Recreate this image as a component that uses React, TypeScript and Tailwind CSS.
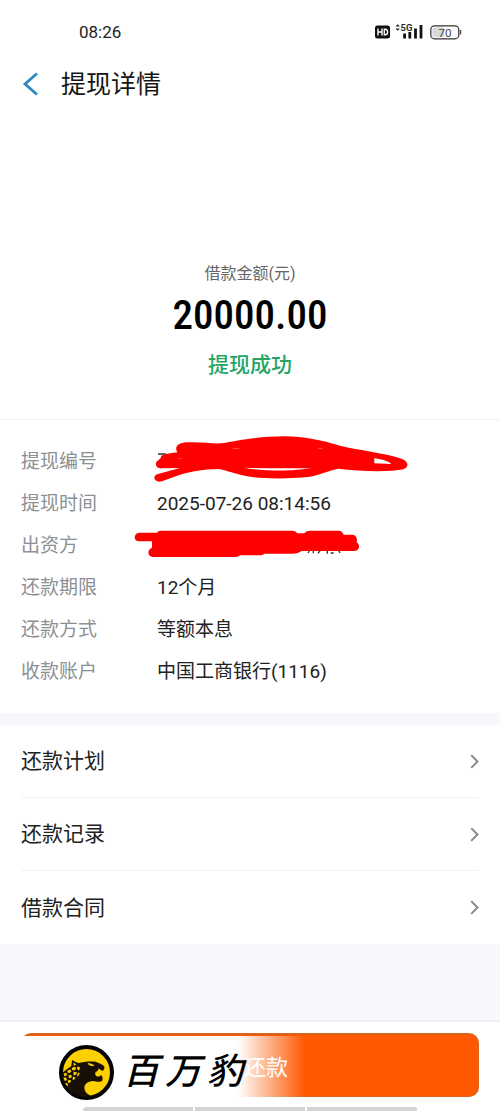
import type { ReactNode } from "react";

const details: { label: string; value: ReactNode }[] = [
  { label: "提现编号", value: "" },
  { label: "提现时间", value: "2025-07-26 08:14:56" },
  { label: "出资方", value: "" },
  { label: "还款期限", value: "12个月" },
  { label: "还款方式", value: "等额本息" },
  { label: "收款账户", value: "中国工商银行(1116)" },
];

const links = ["还款计划", "还款记录", "借款合同"];

function StatusBar() {
  return (
    <div className="flex h-16 items-center justify-between pr-[38px] pl-[79px]">
      <time className="text-[17px] leading-6 text-[#222]">08:26</time>
      <div className="flex items-center">
        <svg width="88" height="18" viewBox="0 0 88 18" aria-label="HD 5G 70">
          <rect x="1" y="2.5" width="15" height="13" rx="2.500" fill="#111" />
          <path d="M4 5.500v7M8 5.500v7M4 9h4M10.300 6.200v5.600h1c1.700 0 2.300-1.200 2.300-2.800s-.6-2.800-2.300-2.800z" fill="none" stroke="#fff" strokeWidth="1.400" />
          <path d="M21.500 3.500l2.200-2.300 2.200 2.300zM21.500 5.500l2.200 2.300 2.200-2.300z" fill="#222" />
          <path d="M30.600 10.500v5M35.800 9v6.500M41.500 5.500v10M47 2v13.500" stroke="#111" strokeWidth="2.800" />
          <text x="26.500" y="8" fontSize="9.500" fontWeight="600" fill="#222" stroke="#fff" strokeWidth="1.200" paintOrder="stroke">5G</text>
          <rect x="56.800" y="2.800" width="28" height="13" rx="3.800" fill="#fff" stroke="#333" strokeWidth="1.200" />
          <path d="M61 4.300h9v10h-9a2.600 2.600 0 0 1-2.600-2.600V6.900A2.600 2.600 0 0 1 61 4.300z" fill="#d8d8d8" />
          <path d="M86.500 7v4.500" stroke="#555" strokeWidth="1.500" />
          <text x="64.500" y="13.500" fontSize="11.500" fill="#444">70</text>
        </svg>
      </div>
    </div>
  );
}

function Redactions() {
  return (
    <svg
      className="pointer-events-none absolute top-[5px] left-[120px]"
      width="300"
      height="140"
      viewBox="0 0 900 420"
      aria-hidden="true"
    >
      <path d="M114 87h24M568 378l-4 6M580 374v11M604 372l-10 13M622 376v10M632 384h9M655 374l5 10" stroke="#333" strokeWidth="4" fill="none" />
      <path
        fill="#f00"
        d="M170 78C164 62 178 52 205 52C250 50 280 58 312 54C350 46 420 34 495 34C550 34 605 46 660 62C720 76 790 84 835 98C858 104 864 114 862 122C858 134 842 134 815 137C760 141 705 136 655 131C620 138 600 150 565 156C500 162 420 162 378 153C340 146 320 136 295 132C250 132 200 142 178 150L128 168C112 174 103 166 103 157C104 150 112 146 125 144L180 129L128 130C114 132 106 124 108 114C110 106 120 104 122 98C124 88 140 86 172 82Z"
      />
      <path d="M372 128C420 138 520 140 574 129C500 131 440 130 372 128ZM763 99L763 115L814 117C804 107 780 102 763 99Z" fill="#fff" />
      <path d="M175 101h12M338 71l20-1M594 70l14 1" stroke="#f99" strokeWidth="1.500" />
      <path
        fill="#f00"
        d="M58 323H110C116 317 122 317 130 317H517C525 317 527 321 533 325H553C558 319 562 317 570 317H656C665 317 668 322 671 329H695C708 329 713 338 710 352C722 360 719 377 703 378H545C538 383 530 386 518 386H433C428 391 420 391 410 391H360C354 396 348 396 340 396H99C82 396 80 374 96 368V349H57C39 347 40 325 58 323Z"
      />
    </svg>
  );
}

function PantherLogo() {
  return (
    <svg className="size-[55px] shrink-0" viewBox="27 29 164 164" aria-hidden="true">
      <circle cx="109" cy="111" r="76" fill="#fdd000" stroke="#050403" strokeWidth="12" />
      <path
        fill="#181007"
        d="M66 74C73 78 80 82 86 83C98 79 120 77 137 79C144 83 158 87 162 93C163 98 162 102 158 105C152 108 150 99 145 100C144 105 141 108 137 109C133 113 135 120 139 122C145 123 149 123 151 119L155 121C158 128 158 134 154 137C147 140 137 137 128 136C116 137 106 142 103 152C101 165 108 176 124 181C80 193 36 160 35 112C43 110 48 101 58 96C66 94 64 84 66 74Z"
      />
      <path d="M112 83C120 83 127 86 133 90C126 93 115 92 112 83Z" fill="#fdd000" />
      <path d="M70 81l9 6l-8 4z" fill="#fdd000" />
      <g fill="#fdd000">
        <path d="M66 97l9-3 3 6-6 5-7-2zM82 92l8 4-3 9-6-4zM53 104l8-2 3 7-7 4-5-3zM70 109l10 1-1 7-8 3zM41 114l8-2 2 7-8 3zM84 111l5 2-4 8-5 2zM56 118l9 1-1 8-8 1zM40 127l8-1 3 7-7 3zM69 124l7 1-4 8-5-2zM53 134l9-1 0 7-7 3zM45 143l6-1 4 7-4 2z" />
      </g>
    </svg>
  );
}

export default function App() {
  return (
    <main className="w-full bg-white font-[Roboto,'Noto_Sans_CJK_SC',sans-serif] text-[#222]">
      <StatusBar />

      <header className="flex h-10 items-center gap-[22px] pl-[22px]">
        <button type="button" aria-label="返回">
          <svg width="17" height="24" viewBox="0 0 17 24" fill="none" stroke="#2a87bf" strokeWidth="2.800">
            <path d="M15 1.500L3 12L15 22.500" />
          </svg>
        </button>
        <h1 className="pt-[2px] text-[25px] leading-9 font-normal text-[#151515]">提现详情</h1>
      </header>

      <section className="flex flex-col items-center pt-[158px] pb-[38px] text-center">
        <p className="text-base leading-6 text-[#666]">借款金额(元)</p>
        <p className="mt-[3px] font-['Roboto_Condensed',Roboto,sans-serif] text-[41px] leading-[52px] font-medium text-black">
          20000.00
        </p>
        <p className="mt-2 text-[21px] leading-8 font-medium text-[#22a565]">提现成功</p>
      </section>

      <section className="relative border-t border-[#f1f2f4] pt-[21px] pb-5">
        <dl className="px-[21px] text-[19px]">
          {details.map(({ label, value }) => (
            <div key={label} className="flex h-[42px] items-center">
              <dt className="w-[136px] shrink-0 text-[#8b9094]">{label}</dt>
              <dd>{value}</dd>
            </div>
          ))}
        </dl>
        <Redactions />
      </section>

      <nav className="border-t-12 border-[#f6f8fb] px-[21px]">
        {links.map((label) => (
          <a
            key={label}
            href="#"
            className="flex h-[73px] items-center justify-between border-b border-[#f1f2f4] text-[21px] last:border-b-0"
          >
            <span className="pt-[2px]">{label}</span>
            <svg width="9" height="15" viewBox="0 0 9 15" fill="none" stroke="#85878b" strokeWidth="1.900">
              <path d="M1.200 1.200L7.500 7.500L1.200 13.800" />
            </svg>
          </a>
        ))}
      </nav>

      <div className="h-[76px] bg-[#f6f8fb]" />

      <footer className="relative border-t-2 border-[#f0f1f3] pt-[11px]">
        <div className="px-[21px]">
          <button
            type="button"
            className="h-16 w-full rounded-[10px] border border-t-2 border-[#d8631d] bg-[#ff5800] pt-1 pl-8 text-[22px] text-white"
          >
            还款
          </button>
        </div>
        <div className="absolute top-[14px] left-0 flex h-[64px] w-[305px] items-center bg-linear-to-r from-white from-78% to-transparent pt-2 pl-[59px]">
          <PantherLogo />
          <div className="ml-[9px] flex gap-[6px] text-[36px] leading-none font-medium text-black italic">
            <span>百</span>
            <span>万</span>
            <span>豹</span>
          </div>
        </div>
        <div className="mx-auto mt-[10px] flex h-1 w-67/100 gap-[2px] overflow-hidden rounded-t-sm">
          <span className="flex-1 bg-[#d3d3d3]" />
          <span className="flex-1 bg-[#d3d3d3]" />
          <span className="flex-1 bg-[#d3d3d3]" />
        </div>
      </footer>
    </main>
  );
}
